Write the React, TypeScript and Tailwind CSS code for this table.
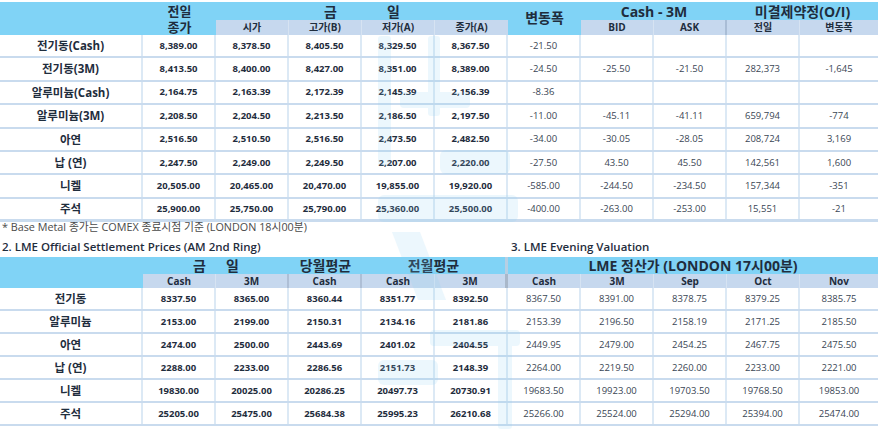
import React from 'react';

const topRows = [
  ['전기동(Cash)', '8,389.00', '8,378.50', '8,405.50', '8,329.50', '8,367.50', '-21.50', '', '', '', ''],
  ['전기동(3M)', '8,413.50', '8,400.00', '8,427.00', '8,351.00', '8,389.00', '-24.50', '-25.50', '-21.50', '282,373', '-1,645'],
  ['알루미늄(Cash)', '2,164.75', '2,163.39', '2,172.39', '2,145.39', '2,156.39', '-8.36', '', '', '', ''],
  ['알루미늄(3M)', '2,208.50', '2,204.50', '2,213.50', '2,186.50', '2,197.50', '-11.00', '-45.11', '-41.11', '659,794', '-774'],
  ['아연', '2,516.50', '2,510.50', '2,516.50', '2,473.50', '2,482.50', '-34.00', '-30.05', '-28.05', '208,724', '3,169'],
  ['납 (연)', '2,247.50', '2,249.00', '2,249.50', '2,207.00', '2,220.00', '-27.50', '43.50', '45.50', '142,561', '1,600'],
  ['니켈', '20,505.00', '20,465.00', '20,470.00', '19,855.00', '19,920.00', '-585.00', '-244.50', '-234.50', '157,344', '-351'],
  ['주석', '25,900.00', '25,750.00', '25,790.00', '25,360.00', '25,500.00', '-400.00', '-263.00', '-253.00', '15,551', '-21'],
];

const bottomRows = [
  ['전기동', '8337.50', '8365.00', '8360.44', '8351.77', '8392.50', '8367.50', '8391.00', '8378.75', '8379.25', '8385.75'],
  ['알루미늄', '2153.00', '2199.00', '2150.31', '2134.16', '2181.86', '2153.39', '2196.50', '2158.19', '2171.25', '2185.50'],
  ['아연', '2474.00', '2500.00', '2443.69', '2401.02', '2404.55', '2449.95', '2479.00', '2454.25', '2467.75', '2475.50'],
  ['납 (연)', '2288.00', '2233.00', '2286.56', '2151.73', '2148.39', '2264.00', '2219.50', '2260.00', '2233.00', '2221.00'],
  ['니켈', '19830.00', '20025.00', '20286.25', '20497.73', '20730.91', '19683.50', '19923.00', '19703.50', '19768.50', '19853.00'],
  ['주석', '25205.00', '25475.00', '25684.38', '25995.23', '26210.68', '25266.00', '25524.00', '25294.00', '25394.00', '25474.00'],
];

const cols = 'grid grid-cols-[143px_73px_73px_73px_73px_73px_73px_73px_73px_73px_78px]';

const DataRow = ({ cells, boldUpTo, h }: { cells: string[]; boldUpTo: number; h: string }) => (
  <div className={`${cols} ${h} border-b-2 border-[#c9dbee]`}>
    {cells.map((c, i) => (
      <div
        key={i}
        className={`flex items-center justify-center ${i < 10 ? 'border-r-2 border-[#dce9f5]' : ''} ${
          i === 0 ? 'text-[11.5px] font-bold' : i <= boldUpTo ? 'text-[9.5px] font-bold' : 'text-[9.5px] font-normal text-[#3a4654]'
        }`}
      >
        {c}
      </div>
    ))}
  </div>
);

const sky = 'bg-[#80d3f6]';
const sub = 'bg-[#c6d8ee]';

const TopTable = () => (
  <div className="pt-[2px]">
    <div className={`${cols} grid-rows-[18px_15px] text-[#1f2d3d]`}>
      <div className={`${sky} col-start-1 row-start-1 row-span-2`} />
      <div className={`${sky} col-start-2 row-start-1 flex items-center justify-center text-[13px] font-bold leading-none`}>전일</div>
      <div className={`${sky} col-start-2 row-start-2 flex items-center justify-center text-[13px] font-bold leading-none`}>종가</div>
      <div className={`${sky} col-start-3 col-span-4 row-start-1 flex items-center justify-center gap-[50px] text-[14px] font-bold`}>
        <span>금</span>
        <span>일</span>
      </div>
      <div className={`${sky} col-start-7 row-start-1 row-span-2 flex items-center justify-center text-[14px] font-bold pb-[2px]`}>
        변동폭
      </div>
      <div className={`${sky} col-start-8 col-span-2 row-start-1 flex items-center justify-center text-[14px] font-bold`}>
        Cash - 3M
      </div>
      <div className={`${sky} col-start-10 col-span-2 row-start-1 flex items-center justify-center text-[14px] font-bold`}>
        미결제약정(O/I)
      </div>
      {['시가', '고가(B)', '저가(A)', '종가(A)'].map((t, i) => (
        <div key={t} className={`${sub} row-start-2 flex items-center justify-center text-[10px] font-bold ${i < 3 ? 'border-r border-[#d6e3f2]' : ''}`} style={{ gridColumnStart: i + 3 }}>
          {t}
        </div>
      ))}
      {['BID', 'ASK', '전일', '변동폭'].map((t, i) => (
        <div
          key={t + i}
          className={`${sub} row-start-2 flex items-center justify-center text-[10px] font-bold ${i === 1 ? 'border-r-2 border-[#a9bdd6]' : i < 3 ? 'border-r border-[#d6e3f2]' : ''}`}
          style={{ gridColumnStart: i + 8 }}
        >
          {t}
        </div>
      ))}
    </div>
    <div className="text-[#1f2d3d]">
      {topRows.map((r, i) => (
        <DataRow key={i} cells={r} boldUpTo={5} h={i === 7 ? 'h-[23.4px] border-b-[3px]' : 'h-[23.4px]'} />
      ))}
    </div>
  </div>
);

const BottomTable = () => (
  <div>
    <div className={`${cols} grid-rows-[17px_14px] text-[#1f2d3d]`}>
      <div className={`${sky} col-start-1 row-start-1 row-span-2`} />
      <div className={`${sky} col-start-2 col-span-2 row-start-1 flex items-center justify-center gap-[20px] text-[14px] font-bold`}>
        <span>금</span>
        <span>일</span>
      </div>
      <div className={`${sky} col-start-4 row-start-1 flex items-center justify-center text-[14px] font-bold`}>당월평균</div>
      <div className={`${sky} col-start-5 col-span-2 row-start-1 flex items-center justify-center text-[14px] font-bold border-r-[3px] border-[#b6cfe3]`}>
        전월평균
      </div>
      <div className={`${sky} col-start-7 col-span-5 row-start-1 flex items-center justify-center text-[14px] font-bold`}>
        LME 정산가 (LONDON 17시00분)
      </div>
      {['Cash', '3M', 'Cash', 'Cash', '3M', 'Cash', '3M', 'Sep', 'Oct', 'Nov'].map((t, i) => (
        <div
          key={i}
          className={`${sub} row-start-2 flex items-center justify-center text-[10px] font-bold ${
            i === 4 ? 'border-r-[3px] border-[#a9b8ca]' : i === 1 || i === 2 ? 'border-r-2 border-[#aebfd6]' : i < 9 ? 'border-r border-[#d6e3f2]' : ''
          }`}
          style={{ gridColumnStart: i + 2 }}
        >
          {t}
        </div>
      ))}
    </div>
    <div className="text-[#1f2d3d]">
      {bottomRows.map((r, i) => (
        <DataRow key={i} cells={r} boldUpTo={5} h="h-[23px]" />
      ))}
    </div>
  </div>
);

const Watermark = () => (
  <svg className="pointer-events-none absolute left-0 top-0" width="878" height="429" viewBox="0 0 878 429">
    <g fill="#8fd2f4" opacity="0.16">
      <rect x="378" y="36" width="13" height="130" rx="3" />
      <rect x="428" y="36" width="12" height="80" rx="3" />
      <rect x="400" y="92" width="70" height="16" rx="4" />
      <rect x="440" y="150" width="70" height="24" rx="6" />
      <rect x="378" y="195" width="140" height="27" rx="6" />
      <path d="M392 232 L420 232 L446 300 L418 300 Z" />
      <rect x="430" y="330" width="90" height="16" rx="4" />
      <rect x="498" y="340" width="14" height="89" rx="3" />
      <rect x="378" y="360" width="60" height="25" rx="6" />
    </g>
  </svg>
);

export default function App() {
  return (
    <div
      className="relative w-[878px] h-[429px] overflow-hidden bg-white"
      style={{ fontFamily: '"Open Sans", "Noto Sans CJK KR", sans-serif' }}
    >
      <TopTable />
      <div className="h-[12px] pl-[2px] text-[10.8px] leading-[12px] text-[#4a4a4a] -mt-[1px]">
        * Base Metal 종가는 COMEX 종료시점 기준 (LONDON 18시00분)
      </div>
      <div className="flex h-[24px] items-center pt-[2px] text-[11.5px] font-semibold text-[#1f2d3d]">
        <div className="w-[511px] pl-[2px]">2. LME Official Settlement Prices (AM 2nd Ring)</div>
        <div>3. LME Evening Valuation</div>
      </div>
      <BottomTable />
      <Watermark />
    </div>
  );
}
